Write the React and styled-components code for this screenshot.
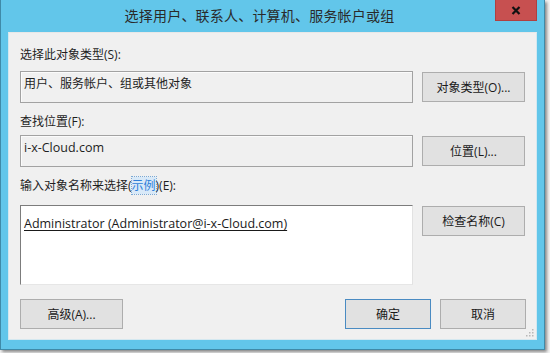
import React from 'react';
import styled, { createGlobalStyle } from 'styled-components';

const GlobalStyle = createGlobalStyle`
  html, body {
    margin: 0;
    padding: 0;
    background: #f4f4f4;
  }
  body {
    font-family: "Open Sans", "Noto Sans CJK SC", sans-serif;
    -webkit-font-smoothing: antialiased;
  }
`;

const Page = styled.div`
  width: 550px;
  height: 353px;
  overflow: hidden;
`;

const Window = styled.div`
  width: 545px;
  height: 350px;
  box-sizing: border-box;
  background: #62c6ea;
  border: 1px solid #3f8aa8;
  border-top: none;
  box-shadow: 2px 2px 3px rgba(0, 0, 0, 0.45);
  display: flex;
  flex-direction: column;
`;

const TitleBar = styled.div`
  height: 32px;
  display: flex;
  align-items: flex-start;
`;

const Title = styled.div`
  flex: 1;
  padding-left: 23px;
  text-align: center;
  font-family: "Noto Sans CJK SC", sans-serif;
  font-size: 14px;
  letter-spacing: 0.2px;
  line-height: 31px;
  color: #2a2a2a;
`;

const CloseButton = styled.div`
  width: 42px;
  height: 21px;
  margin-right: 7px;
  box-sizing: border-box;
  background: #c75050;
  border: 1px solid #b04040;
  border-top: none;
  display: flex;
  align-items: center;
  justify-content: center;
`;

const Client = styled.div`
  position: relative;
  margin: 0 7px 0 7px;
  height: 308px;
  box-sizing: border-box;
  background: #f0f0f0;
  border: 1px solid #d4e8f0;
  border-top-color: #e8e8e8;
  padding: 14px 10px 0 11px;
  display: flex;
  flex-direction: column;
`;

const Label = styled.div`
  height: 16px;
  line-height: 16px;
  font-size: 12px;
  color: #1e1e1e;
  margin-top: ${({ $top }) => $top || 0}px;
`;

const Link = styled.span`
  color: #2f7fd8;
  background: #d8e9f8;
  outline: 1px dotted #7aa9d6;
`;

const Row = styled.div`
  display: flex;
  align-items: ${({ $align }) => $align || 'center'};
  gap: 9px;
  margin-top: ${({ $top }) => $top || 0}px;
`;

const ReadBox = styled.div`
  width: 393px;
  height: 32px;
  box-sizing: border-box;
  background: #f0f0f0;
  border: 1px solid #a2a2a2;
  box-shadow: inset 1px 1px 0 #fbfbfb;
  padding: 4px 3px 0;
  font-size: ${({ $latin }) => ($latin ? '12.5px' : '12px')};
  line-height: 16px;
  color: #1e1e1e;
`;

const NameArea = styled.div`
  width: 393px;
  height: 80px;
  box-sizing: border-box;
  background: #ffffff;
  border: 1px solid;
  border-color: #7c7c7c #e2e2e2 #e6e6e6 #7c7c7c;
  padding: 9px 3px 0;
  font-size: 12.5px;
  line-height: 18px;
  color: #1a1a1a;
`;

const Resolved = styled.span`
  text-decoration: underline;
  text-underline-offset: 2px;
`;

const Button = styled.div`
  width: ${({ $w }) => $w || 103}px;
  height: 30px;
  box-sizing: border-box;
  background: #e1e1e1;
  border: 1px solid ${({ $default }) => ($default ? '#4a8bc2' : '#adadad')};
  display: flex;
  align-items: center;
  justify-content: center;
  font-size: 12px;
  color: #1a1a1a;
  margin-top: ${({ $top }) => $top || 0}px;
`;

const Footer = styled.div`
  display: flex;
  align-items: center;
  margin-top: 14px;
`;

const Spacer = styled.div`
  flex: 1;
`;

const Grip = styled.svg`
  position: absolute;
  right: 2px;
  bottom: 2px;
`;

const App = () => (
  <Page>
    <GlobalStyle />
    <Window>
      <TitleBar>
        <Title>选择用户、联系人、计算机、服务帐户或组</Title>
        <CloseButton>
          <svg width="10" height="9" viewBox="0 0 10 9">
            <path d="M1.5 1 L8.5 8 M8.5 1 L1.5 8" stroke="#111" strokeWidth="2.2" />
          </svg>
        </CloseButton>
      </TitleBar>
      <Client>
        <Label>选择此对象类型(S):</Label>
        <Row $top={8}>
          <ReadBox>用户、服务帐户、组或其他对象</ReadBox>
          <Button>对象类型(O)...</Button>
        </Row>
        <Label $top={11}>查找位置(F):</Label>
        <Row $top={5}>
          <ReadBox $latin>i-x-Cloud.com</ReadBox>
          <Button>位置(L)...</Button>
        </Row>
        <Label $top={11}>
          输入对象名称来选择(<Link>示例</Link>)(E):
        </Label>
        <Row $top={11} $align="flex-start">
          <NameArea>
            <Resolved>Administrator (Administrator@i-x-Cloud.com)</Resolved>
          </NameArea>
          <Button $top={1}>检查名称(C)</Button>
        </Row>
        <Footer>
          <Button>高级(A)...</Button>
          <Spacer />
          <Button $w={86} $default>确定</Button>
          <Button $w={86} style={{ marginLeft: 9 }}>取消</Button>
        </Footer>
        <Grip width="9" height="9" viewBox="0 0 9 9">
          <g fill="#b8b8b8">
            <rect x="7" y="1" width="1.5" height="1.5" />
            <rect x="4" y="4" width="1.5" height="1.5" />
            <rect x="7" y="4" width="1.5" height="1.5" />
            <rect x="1" y="7" width="1.5" height="1.5" />
            <rect x="4" y="7" width="1.5" height="1.5" />
            <rect x="7" y="7" width="1.5" height="1.5" />
          </g>
        </Grip>
      </Client>
    </Window>
  </Page>
);

export default App;
